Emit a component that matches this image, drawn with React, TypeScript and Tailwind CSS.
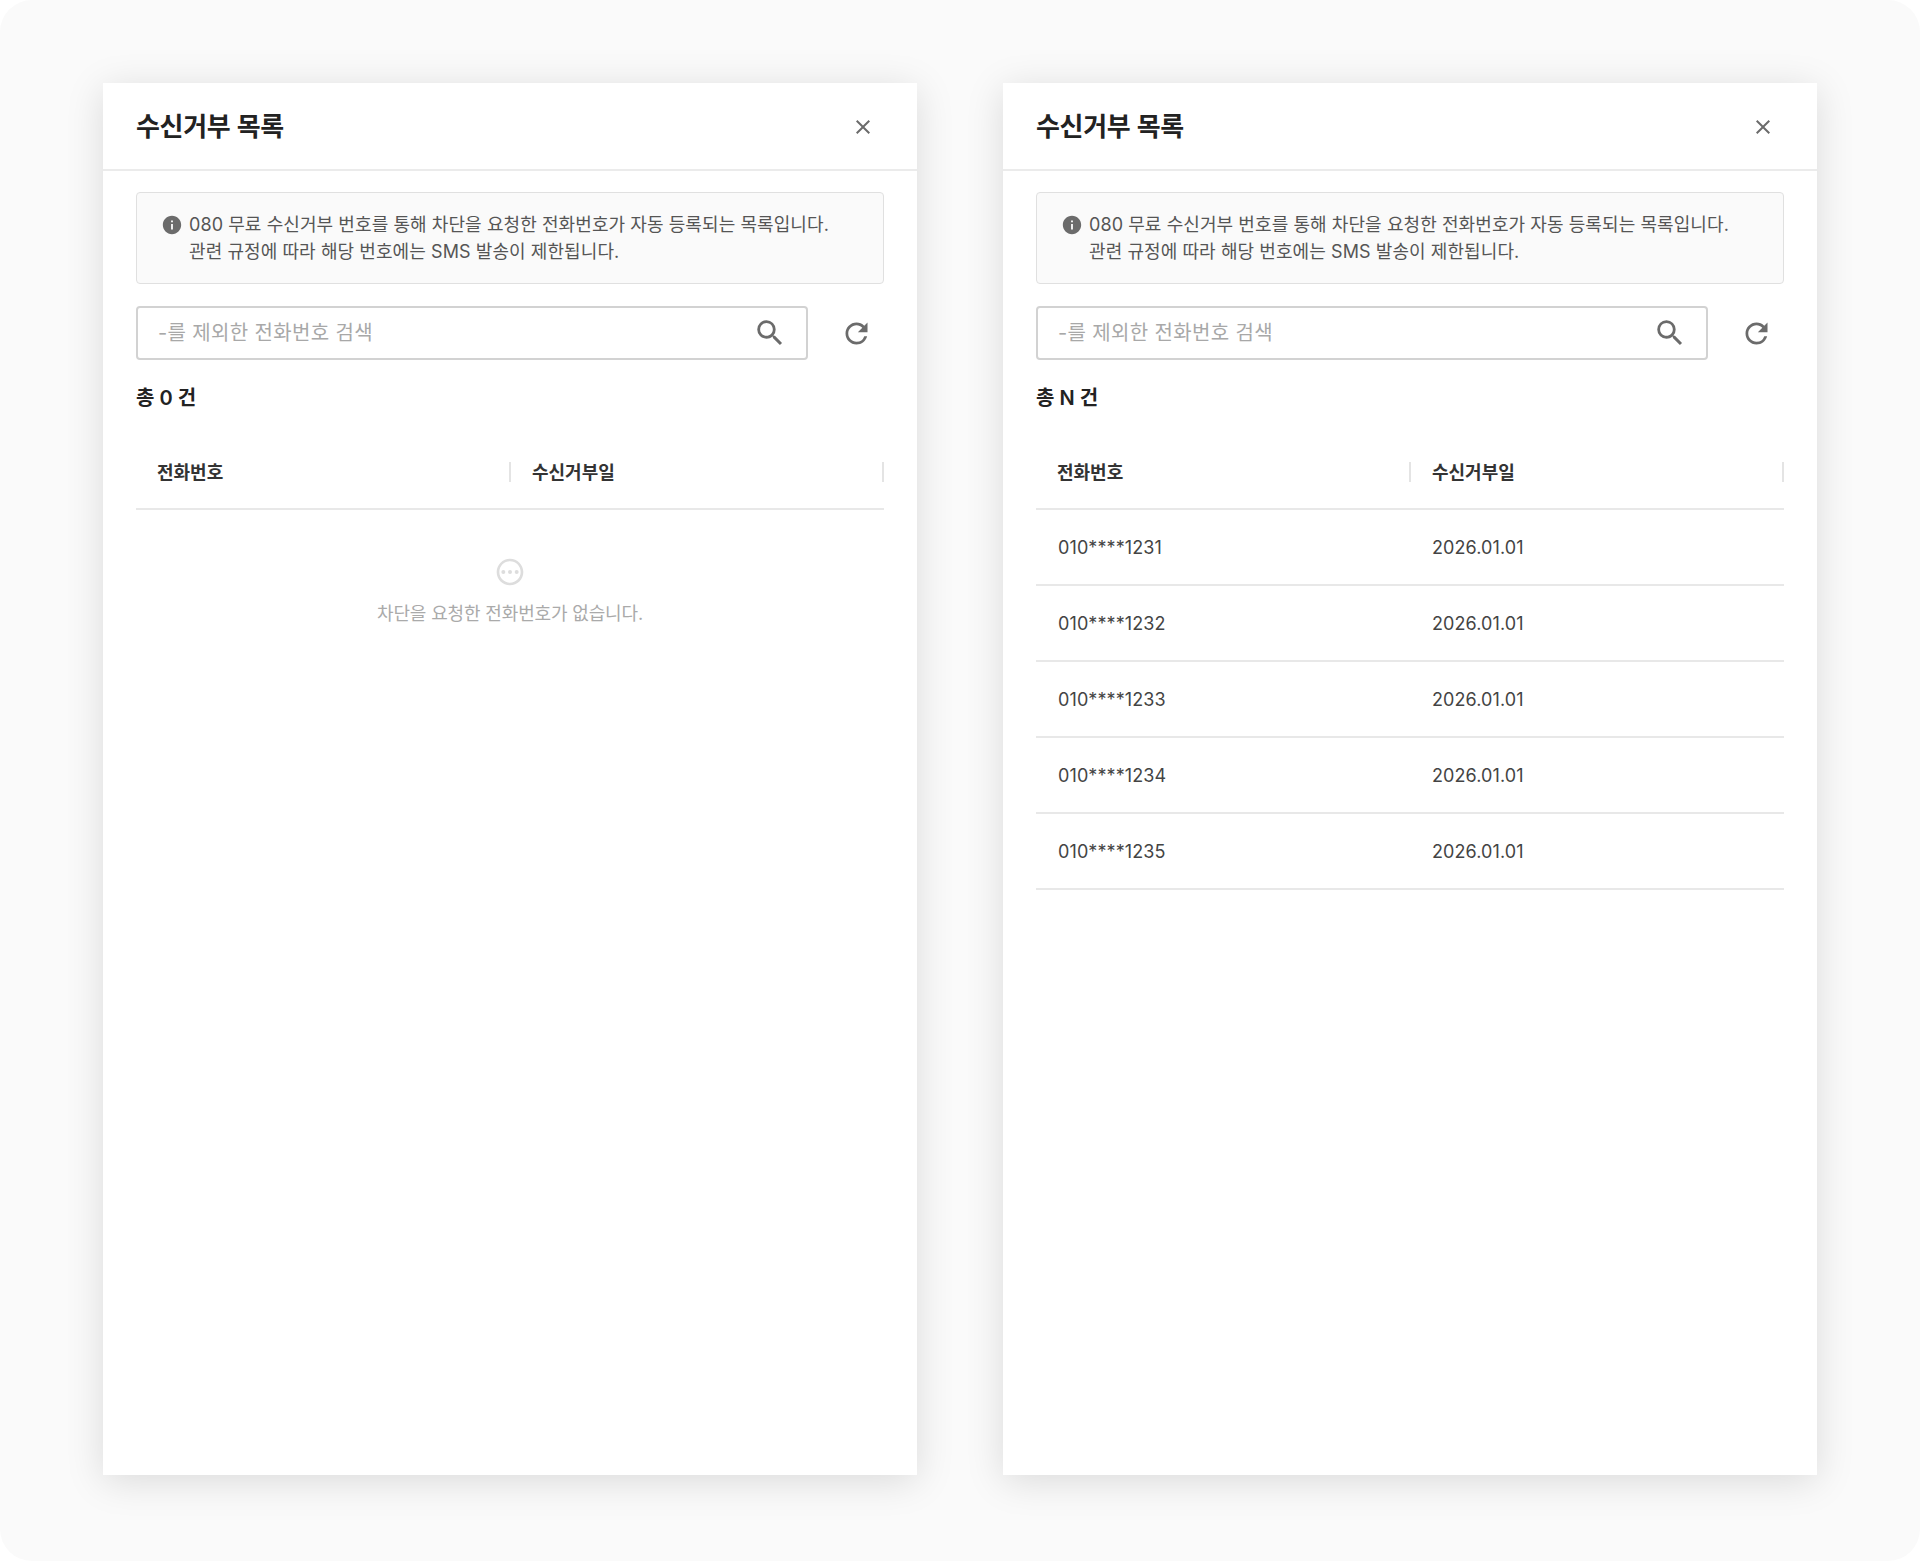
import { MdClose, MdInfo, MdOutlinePending, MdRefresh, MdSearch } from 'react-icons/md'

interface PanelProps {
    total: string
    rows: string[]
}

const Panel = ({ total, rows }: PanelProps) => {
    return (
        <div className="flex h-[1392px] w-[814px] flex-col bg-white shadow-[0_6px_36px_rgba(0,0,0,0.13)]">
            <div className="flex h-[88px] shrink-0 items-center justify-between border-b-2 border-[#ebebeb] pt-[2px] pr-[42px] pl-[33px]">
                <h2 className="text-[26px] leading-[32px] font-semibold tracking-[-0.3px] text-[#222222]">수신거부 목록</h2>
                <MdClose size={24} className="text-[#6b6b6b]" />
            </div>
            <div className="flex flex-col px-[33px] pt-[21px]">
                <div className="flex h-[92px] gap-[6px] rounded border border-[#e0e0e0] bg-[#fafafa] pt-[18px] pl-[24px]">
                    <MdInfo size={22} className="mt-[3px] shrink-0 text-[#6b6b6b]" />
                    <p className="text-[18px] leading-[27px] tracking-[0.08px] text-[#555555]">
                        080 무료 수신거부 번호를 통해 차단을 요청한 전화번호가 자동 등록되는 목록입니다.
                        <br />
                        관련 규정에 따라 해당 번호에는 SMS 발송이 제한됩니다.
                    </p>
                </div>
                <div className="mt-[22px] flex items-center">
                    <div className="flex h-[54px] w-[672px] items-center justify-between rounded border-2 border-[#d2d2d2] pr-[19px] pl-[20px]">
                        <span className="text-[20px] tracking-[0.35px] text-[#a8a8a8]">-를 제외한 전화번호 검색</span>
                        <MdSearch size={34} className="text-[#6b6b6b]" />
                    </div>
                    <MdRefresh size={33} className="ml-[32px] text-[#6b6b6b]" />
                </div>
                <p className="mt-[24px] text-[20px] leading-[28px] font-semibold text-[#222222]">{total}</p>
                <div className="mt-[22px] flex h-[76px] items-center border-b-2 border-[#e8e8e8] pt-[2px]">
                    <div className="flex h-[20px] w-[375px] items-center border-r-2 border-[#e4e4e4] pl-[21px] text-[18px] font-semibold text-[#333333]">
                        전화번호
                    </div>
                    <div className="flex h-[20px] w-[373px] items-center border-r-2 border-[#e4e4e4] pl-[21px] text-[18px] font-semibold text-[#333333]">
                        수신거부일
                    </div>
                </div>
                {rows.length === 0 ? (
                    <div className="flex flex-col items-center pt-[46px]">
                        <MdOutlinePending size={32} className="text-[#dddddd]" />
                        <p className="mt-[12px] text-[18px] leading-[27px] tracking-[-0.15px] text-[#aaaaaa]">차단을 요청한 전화번호가 없습니다.</p>
                    </div>
                ) : (
                    rows.map((phone) => (
                        <div key={phone} className="flex h-[76px] items-center border-b-2 border-[#e8e8e8] text-[18px] tracking-[0.1px] text-[#444444]">
                            <div className="w-1/2 pl-[22px]">{phone}</div>
                            <div className="w-1/2 pl-[22px]">2026.01.01</div>
                        </div>
                    ))
                )}
            </div>
        </div>
    )
}

const App = () => {
    return (
        <div className="h-[1561px] w-[1920px] bg-white font-['Inter','Noto_Sans_CJK_KR',sans-serif]">
            <div className="flex h-full gap-[86px] rounded-[32px] bg-[#fafafa] pt-[83px] pl-[103px]">
                <Panel total="총 0 건" rows={[]} />
                <Panel
                    total="총 N 건"
                    rows={['010****1231', '010****1232', '010****1233', '010****1234', '010****1235']}
                />
            </div>
        </div>
    )
}

export default App
